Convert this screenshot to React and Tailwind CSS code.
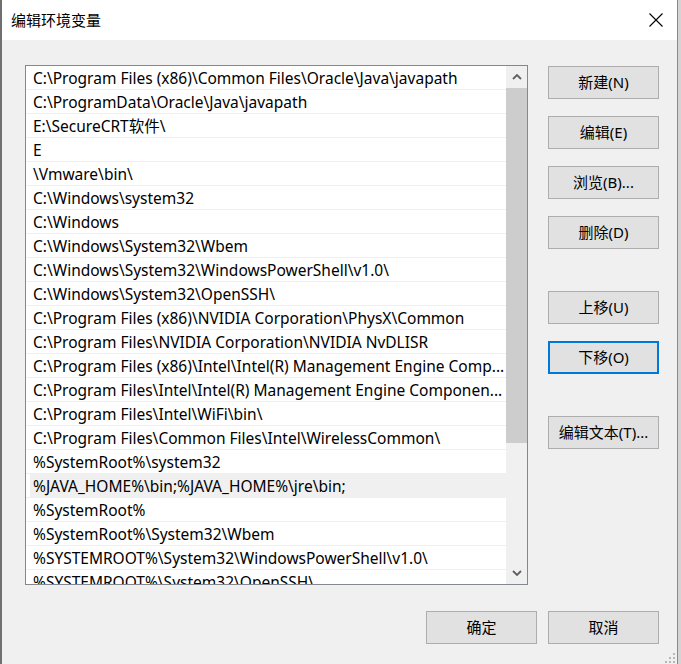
import React from 'react';

const PATHS = [
  'C:\\Program Files (x86)\\Common Files\\Oracle\\Java\\javapath',
  'C:\\ProgramData\\Oracle\\Java\\javapath',
  'E:\\SecureCRT软件\\',
  'E',
  '\\Vmware\\bin\\',
  'C:\\Windows\\system32',
  'C:\\Windows',
  'C:\\Windows\\System32\\Wbem',
  'C:\\Windows\\System32\\WindowsPowerShell\\v1.0\\',
  'C:\\Windows\\System32\\OpenSSH\\',
  'C:\\Program Files (x86)\\NVIDIA Corporation\\PhysX\\Common',
  'C:\\Program Files\\NVIDIA Corporation\\NVIDIA NvDLISR',
  'C:\\Program Files (x86)\\Intel\\Intel(R) Management Engine Comp...',
  'C:\\Program Files\\Intel\\Intel(R) Management Engine Componen...',
  'C:\\Program Files\\Intel\\WiFi\\bin\\',
  'C:\\Program Files\\Common Files\\Intel\\WirelessCommon\\',
  '%SystemRoot%\\system32',
  '%JAVA_HOME%\\bin;%JAVA_HOME%\\jre\\bin;',
  '%SystemRoot%',
  '%SystemRoot%\\System32\\Wbem',
  '%SYSTEMROOT%\\System32\\WindowsPowerShell\\v1.0\\',
  '%SYSTEMROOT%\\System32\\OpenSSH\\',
];

const SELECTED = 17;

const font = { fontFamily: '"Noto Sans", "Noto Sans CJK SC", sans-serif' };

function Btn({ children, focused, className = '' }) {
  return (
    <div
      className={`w-[111px] h-[33px] flex items-center justify-center bg-[#e1e1e1] text-[15px] text-black ${
        focused ? 'border-2 border-[#0078d7]' : 'border border-[#adadad]'
      } ${className}`}
    >
      {children}
    </div>
  );
}

function Chevron({ down }) {
  return (
    <svg width="10" height="6" viewBox="0 0 10 6">
      <path
        d={down ? 'M1 1 L5 5 L9 1' : 'M1 5 L5 1 L9 5'}
        fill="none"
        stroke="#606060"
        strokeWidth="1.8"
      />
    </svg>
  );
}

export default function App() {
  return (
    <div className="w-[681px] h-[664px] bg-[#d4d4d4] flex overflow-hidden" style={font}>
      <div className="w-[678px] h-[664px] flex flex-col border-l-2 border-l-[#707070] border-r border-r-[#8a8a8a]">
        {/* Title bar */}
        <div className="h-[40px] bg-white flex items-center justify-between pl-[9px] pr-[14px] shrink-0">
          <span className="text-[15px] text-black">编辑环境变量</span>
          <svg width="14" height="14" viewBox="0 0 14 14">
            <path d="M0.5 0.5 L13.5 13.5 M13.5 0.5 L0.5 13.5" stroke="#000" strokeWidth="1.1" />
          </svg>
        </div>

        {/* Body */}
        <div className="relative flex-1 bg-[#f0f0f0] flex flex-col pl-[23px] pt-[25px]">
          <div className="flex">
            {/* List */}
            <div className="w-[503px] h-[520px] border border-[#828790] bg-white flex overflow-hidden">
              <div className="w-[480px] overflow-hidden">
                {PATHS.map((p, i) => (
                  <div
                    key={i}
                    className="h-[24px] border-b border-[#f0f0f0] flex items-center"
                  >
                    <div
                      className={`h-full w-full flex items-center pt-[2px] whitespace-nowrap overflow-hidden text-[15.5px] text-black ${
                        i === SELECTED ? 'ml-[4px] pl-[3px] bg-[#f0f0f0]' : 'pl-[7px]'
                      }`}
                    >
                      {p}
                    </div>
                  </div>
                ))}
              </div>
              <div className="w-[21px] bg-[#f0f0f0] flex flex-col">
                <div className="h-[22px] flex items-center justify-center">
                  <Chevron />
                </div>
                <div className="h-[355px] bg-[#cdcdcd]" />
                <div className="flex-1" />
                <div className="h-[22px] flex items-center justify-center">
                  <Chevron down />
                </div>
              </div>
            </div>

            {/* Side buttons */}
            <div className="ml-[20px] pt-[1px] flex flex-col">
              <Btn>新建(N)</Btn>
              <Btn className="mt-[17px]">编辑(E)</Btn>
              <Btn className="mt-[17px]">浏览(B)...</Btn>
              <Btn className="mt-[17px]">删除(D)</Btn>
              <Btn className="mt-[42px]">上移(U)</Btn>
              <Btn className="mt-[17px]" focused>下移(O)</Btn>
              <Btn className="mt-[42px]">编辑文本(T)...</Btn>
            </div>
          </div>

          {/* Bottom buttons */}
          <div className="flex justify-end gap-[11px] mt-[26px] pr-[18px]">
            <Btn>确定</Btn>
            <Btn>取消</Btn>
          </div>

          {/* Resize grip */}
          <div className="absolute right-[2px] bottom-[1px] grid grid-cols-3 gap-[2px]">
            <span className="w-[2px] h-[2px]" />
            <span className="w-[2px] h-[2px]" />
            <span className="w-[2px] h-[2px] bg-[#b8b8b8]" />
            <span className="w-[2px] h-[2px]" />
            <span className="w-[2px] h-[2px] bg-[#b8b8b8]" />
            <span className="w-[2px] h-[2px] bg-[#b8b8b8]" />
            <span className="w-[2px] h-[2px] bg-[#b8b8b8]" />
            <span className="w-[2px] h-[2px] bg-[#b8b8b8]" />
            <span className="w-[2px] h-[2px] bg-[#b8b8b8]" />
          </div>
        </div>
      </div>
    </div>
  );
}
